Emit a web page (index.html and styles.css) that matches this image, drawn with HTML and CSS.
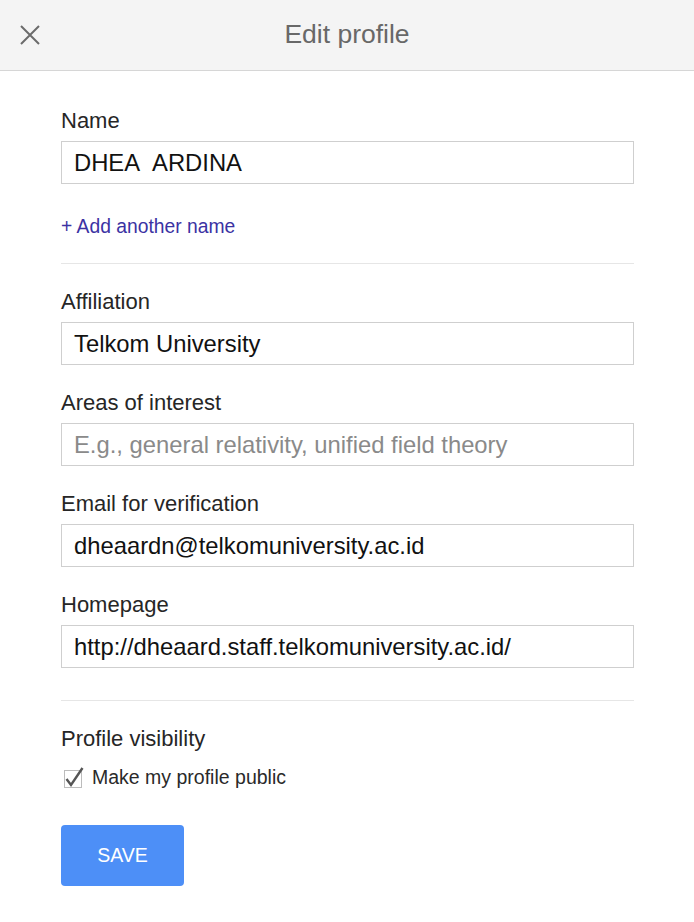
FILE: index.html
```html
<!DOCTYPE html>
<html lang="en">
<head>
<meta charset="utf-8">
<title>Edit profile</title>
<link rel="stylesheet" href="styles.css">
</head>
<body>
<div class="dialog">
  <header class="header">
    <button class="close" aria-label="Close">
      <svg width="20" height="20" viewBox="0 0 20 20"><path d="M1 1 L19 19 M19 1 L1 19" stroke="#6b6b6b" stroke-width="2" fill="none"/></svg>
    </button>
    <h1 class="title">Edit profile</h1>
    <span></span>
  </header>
  <main class="content">
    <section class="section">
      <div class="field">
        <label class="label">Name</label>
        <div class="input">DHEA&nbsp; ARDINA</div>
      </div>
      <a class="add-link" href="#">+ Add another name</a>
    </section>
    <section class="section fields">
      <div class="field">
        <label class="label">Affiliation</label>
        <div class="input">Telkom University</div>
      </div>
      <div class="field">
        <label class="label">Areas of interest</label>
        <div class="input placeholder">E.g., general relativity, unified field theory</div>
      </div>
      <div class="field">
        <label class="label">Email for verification</label>
        <div class="input">dheaardn@telkomuniversity.ac.id</div>
      </div>
      <div class="field">
        <label class="label">Homepage</label>
        <div class="input">http://dheaard.staff.telkomuniversity.ac.id/</div>
      </div>
    </section>
    <section class="section last">
      <div class="label">Profile visibility</div>
      <div class="check-row">
        <span class="checkbox">
          <svg width="22" height="24" viewBox="0 0 22 24"><path d="M2.5 13 L7 19 L18.5 2" stroke="#555" stroke-width="2.4" fill="none"/></svg>
        </span>
        <span class="check-text">Make my profile public</span>
      </div>
      <button class="save">SAVE</button>
    </section>
  </main>
</div>
</body>
</html>
```
FILE: styles.css
```css
* { box-sizing: border-box; }
html, body { margin: 0; padding: 0; background: #fff; }
body {
  font-family: "Liberation Sans", Arial, sans-serif;
  color: #222;
}
.dialog {
  min-height: 922px;
  border-bottom: 1px solid #c6c6c6;
}
.header {
  height: 71px;
  background: #f4f4f4;
  border-bottom: 1px solid #d6d6d6;
  display: grid;
  grid-template-columns: 61px 1fr 61px;
  align-items: center;
}
.close {
  border: 0;
  background: none;
  padding: 0 0 0 20px;
  margin: 0;
  height: 20px;
  display: flex;
  align-items: center;
  margin-top: -1px;
}
.title {
  margin: 0;
  text-align: center;
  font-weight: normal;
  font-size: 26.5px;
  color: #686868;
  margin-top: -1px;
}
.content {
  padding: 37px 60px 0 61px;
}
.section {
  display: flex;
  flex-direction: column;
  padding-bottom: 24px;
  border-bottom: 1px solid #e6e6e6;
  margin-bottom: 25px;
}
.fields {
  gap: 25px;
  padding-bottom: 32px;
}
.section.last {
  border-bottom: 0;
  align-items: flex-start;
}
.field {
  display: flex;
  flex-direction: column;
}
.label {
  font-size: 22px;
  line-height: 26px;
  color: #262626;
  margin-bottom: 7px;
}
.input {
  height: 43px;
  border: 1px solid #cfcfcf;
  padding: 0 12px;
  font-size: 23.8px;
  line-height: 41px;
  color: #111;
  white-space: nowrap;
  overflow: hidden;
}
.input.placeholder { color: #8a8a8a; }
.add-link {
  margin-top: 31px;
  font-size: 19.3px;
  line-height: 24px;
  color: #3b32a3;
  text-decoration: none;
}
.check-row {
  display: flex;
  align-items: center;
  margin-top: 5px;
  height: 26px;
  padding-left: 3px;
}
.checkbox {
  width: 18px;
  height: 18px;
  border: 1px solid #bcbcbc;
  position: relative;
  margin-top: 4px;
}
.checkbox svg {
  position: absolute;
  left: -1px;
  top: -5px;
}
.check-text {
  margin-left: 10px;
  font-size: 19.5px;
  color: #2a2a2a;
}
.save {
  margin-top: 35px;
  width: 123px;
  height: 61px;
  background: #4d8ff7;
  border: 0;
  border-radius: 4px;
  color: #fff;
  font-family: "Liberation Sans", Arial, sans-serif;
  font-size: 19.5px;
  padding: 0;
}
```
